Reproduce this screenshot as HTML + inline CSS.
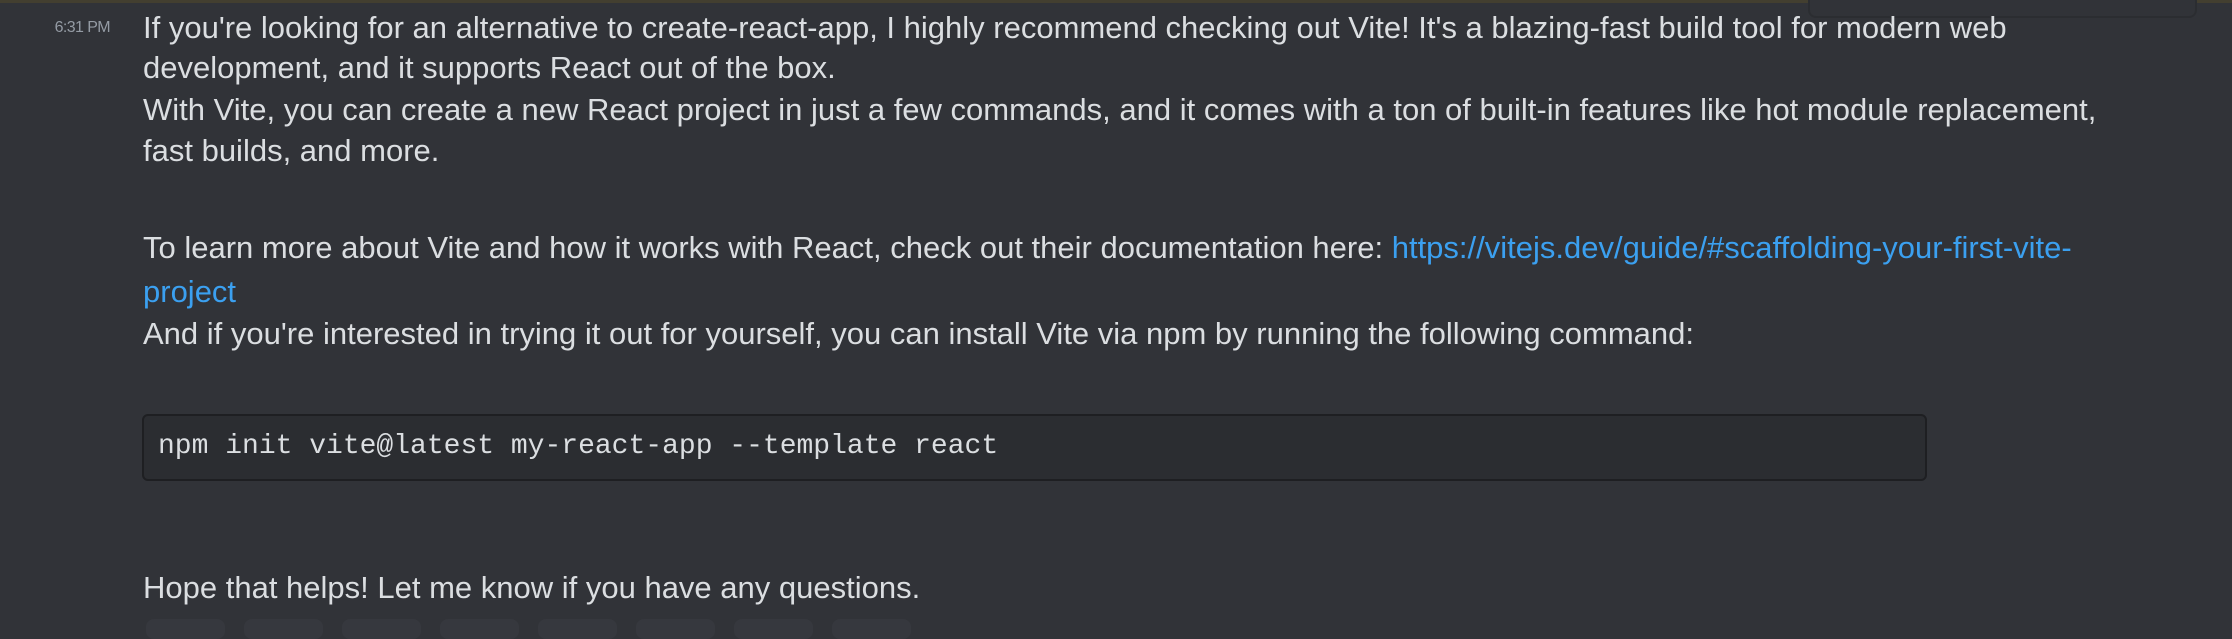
<!DOCTYPE html>
<html><head><meta charset="utf-8"><style>
html,body{margin:0;padding:0;}
body{width:2232px;height:624px;background:#313338;position:relative;overflow:hidden;font-family:"Liberation Sans",sans-serif;}
.strip{position:absolute;left:0;top:0;width:2232px;height:3px;background:#433f30;}
.pop{position:absolute;left:1808px;top:-10px;width:385px;height:24px;background:#313338;border:2px solid #2b2d31;border-radius:8px;}
.ts{position:absolute;left:30px;width:80px;top:18px;text-align:right;font-size:16px;letter-spacing:-0.6px;line-height:20px;color:#949ba4;white-space:nowrap;}
.l{position:absolute;left:143px;font-size:31px;line-height:44px;color:#dbdee1;white-space:nowrap;}
a{color:#3ba0f0;text-decoration:none;}
.code{position:absolute;left:142px;top:414px;width:1781px;height:63px;background:#2b2d31;border:2px solid #1e1f22;border-radius:6px;}
.codet{position:absolute;left:158px;top:431px;font-family:"Liberation Mono",monospace;font-size:28px;line-height:32px;color:#dbdee1;white-space:nowrap;}
.r{position:absolute;top:619px;width:79px;height:20px;background:#36383e;border-radius:8px;}
</style></head><body>
<div class="strip"></div>
<div class="pop"></div>
<div class="ts">6:31 PM</div>
<div class="l" style="top:6px">If you're looking for an alternative to create-react-app, I highly recommend checking out Vite! It's a blazing-fast build tool for modern web</div>
<div class="l" style="top:46px">development, and it supports React out of the box.</div>
<div class="l" style="top:88px">With Vite, you can create a new React project in just a few commands, and it comes with a ton of built-in features like hot module replacement,</div>
<div class="l" style="top:129px">fast builds, and more.</div>
<div class="l" style="top:226px">To learn more about Vite and how it works with React, check out their documentation here: <a>https://vitejs.dev/guide/#scaffolding-your-first-vite-</a></div>
<div class="l" style="top:270px"><a>project</a></div>
<div class="l" style="top:312px">And if you're interested in trying it out for yourself, you can install Vite via npm by running the following command:</div>
<div class="code"></div>
<div class="codet">npm init vite@latest my-react-app --template react</div>
<div class="l" style="top:566px">Hope that helps! Let me know if you have any questions.</div>
<div class="r" style="left:146px"></div>
<div class="r" style="left:244px"></div>
<div class="r" style="left:342px"></div>
<div class="r" style="left:440px"></div>
<div class="r" style="left:538px"></div>
<div class="r" style="left:636px"></div>
<div class="r" style="left:734px"></div>
<div class="r" style="left:832px"></div>
</body></html>
